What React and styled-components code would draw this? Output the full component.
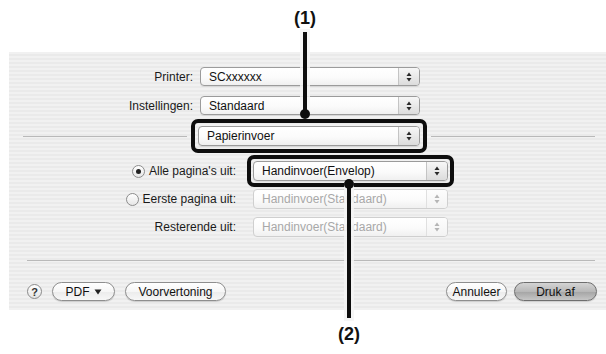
import React from "react";
import styled, { createGlobalStyle } from "styled-components";

const GlobalStyle = createGlobalStyle`
  html, body {
    margin: 0;
    padding: 0;
    background: #ffffff;
  }
  body {
    font-family: "Liberation Sans", Arial, sans-serif;
    color: #1a1a1a;
  }
`;

const Page = styled.div`
  position: relative;
  width: 606px;
  height: 354px;
  overflow: hidden;
  background: #ffffff;
`;

const CalloutRow = styled.div`
  height: ${(p) => p.h}px;
  display: flex;
  align-items: ${(p) => (p.bottom ? "flex-end" : "flex-start")};
`;

const CalloutText = styled.div`
  width: 40px;
  margin-left: ${(p) => p.x - 20}px;
  margin-top: ${(p) => p.top || 0}px;
  margin-bottom: ${(p) => p.bottomGap || 0}px;
  text-align: center;
  font-weight: bold;
  font-size: 18px;
  line-height: 20px;
  color: #111;
`;

const Panel = styled.div`
  margin-left: 9px;
  width: 597px;
  height: 258px;
  box-sizing: border-box;
  padding-top: 15px;
  display: flex;
  flex-direction: column;
  background: repeating-linear-gradient(
    to bottom,
    #f1f1f1 0px,
    #f1f1f1 2px,
    #eaeaea 2px,
    #eaeaea 4px
  );
`;

const FormGrid = styled.div`
  display: grid;
  grid-template-columns: ${(p) => p.labelWidth}px ${(p) => p.fieldWidth}px;
  column-gap: ${(p) => p.colGap}px;
  row-gap: ${(p) => p.rowGap}px;
  margin-top: ${(p) => p.mt || 0}px;
  align-items: center;
`;

const Label = styled.div`
  display: flex;
  align-items: center;
  justify-content: flex-end;
  gap: 4px;
  font-size: 12px;
  color: #1a1a1a;
  white-space: nowrap;
`;

const Highlight = styled.div`
  position: relative;
  &::after {
    content: "";
    position: absolute;
    inset: ${(p) => p.inset || "-6px"};
    border: 4px solid #0d0d0d;
    border-radius: 7px;
    pointer-events: none;
  }
`;

const PopupBox = styled.div`
  height: ${(p) => p.h || 19}px;
  width: ${(p) => p.w}px;
  box-sizing: border-box;
  display: flex;
  align-items: stretch;
  border: 1px solid ${(p) => (p.disabled ? "#cfcfcf" : "#9b9b9b")};
  border-radius: 4px;
  background: linear-gradient(to bottom, #ffffff 0%, #fbfbfb 55%, #f0f0f0 100%);
  box-shadow: ${(p) => (p.disabled ? "none" : "0 1px 0 rgba(0,0,0,0.08)")};
`;

const PopupText = styled.div`
  flex: 1;
  display: flex;
  align-items: center;
  padding-left: 8px;
  font-size: 12px;
  color: ${(p) => (p.disabled ? "#a8a8a8" : "#111")};
  white-space: nowrap;
  overflow: hidden;
`;

const ArrowCell = styled.div`
  width: 20px;
  display: flex;
  align-items: center;
  justify-content: center;
  border-left: 1px solid ${(p) => (p.disabled ? "#e0e0e0" : "#c4c4c4")};
  border-radius: 0 3px 3px 0;
  background: ${(p) =>
    p.disabled
      ? "linear-gradient(to bottom, #fdfdfd, #f3f3f3)"
      : "linear-gradient(to bottom, #f7f7f7, #dcdcdc)"};
`;

const Arrows = ({ disabled }) => (
  <svg width="6" height="10" viewBox="0 0 6 10">
    <path d="M3 0.5 L5.5 4 L0.5 4 Z" fill={disabled ? "#b5b5b5" : "#2a2a2a"} />
    <path d="M3 9.5 L5.5 6 L0.5 6 Z" fill={disabled ? "#b5b5b5" : "#2a2a2a"} />
  </svg>
);

const Popup = ({ text, w, h, disabled }) => (
  <PopupBox w={w} h={h} disabled={disabled}>
    <PopupText disabled={disabled}>{text}</PopupText>
    <ArrowCell disabled={disabled}>
      <Arrows disabled={disabled} />
    </ArrowCell>
  </PopupBox>
);

const DividerRow = styled.div`
  display: flex;
  align-items: center;
  margin-top: ${(p) => p.mt}px;
  padding: 0 11px 0 14px;
  gap: 11px;
`;

const Rule = styled.div`
  flex: 1;
  height: 1px;
  background: #b9b9b9;
`;

const Separator = styled.div`
  height: 1px;
  margin: ${(p) => p.mt}px 11px 0 18px;
  background: #b9b9b9;
`;

const Radio = styled.span`
  width: 13px;
  height: 13px;
  box-sizing: border-box;
  border-radius: 50%;
  border: 1px solid #8c8c8c;
  background: linear-gradient(to bottom, #ffffff, #e6e6e6);
  display: inline-flex;
  align-items: center;
  justify-content: center;
  &::after {
    content: "";
    width: 5px;
    height: 5px;
    border-radius: 50%;
    background: ${(p) => (p.checked ? "#222" : "transparent")};
  }
`;

const ButtonRow = styled.div`
  display: flex;
  align-items: center;
  margin-top: ${(p) => p.mt}px;
  padding: 0 9px 0 18px;
  gap: 10px;
`;

const Spacer = styled.div`
  flex: 1;
`;

const HelpButton = styled.div`
  width: 15px;
  height: 15px;
  box-sizing: border-box;
  border-radius: 50%;
  border: 1px solid #8a8a8a;
  background: linear-gradient(to bottom, #ffffff, #e4e4e4);
  display: flex;
  align-items: center;
  justify-content: center;
  font-size: 11px;
  font-weight: bold;
  color: #333;
`;

const PillButton = styled.div`
  width: ${(p) => p.w}px;
  height: 19px;
  box-sizing: border-box;
  border-radius: 10px;
  border: 1px solid ${(p) => (p.primary ? "#6e6e6e" : "#8e8e8e")};
  background: ${(p) =>
    p.primary
      ? "linear-gradient(to bottom, #d4d4d4 0%, #b8b8b8 50%, #a4a4a4 51%, #c6c6c6 100%)"
      : "linear-gradient(to bottom, #ffffff 0%, #f6f6f6 50%, #ebebeb 51%, #f7f7f7 100%)"};
  box-shadow: 0 1px 1px rgba(0, 0, 0, 0.15);
  margin-left: ${(p) => p.ml || 0}px;
  display: flex;
  align-items: center;
  justify-content: center;
  gap: 4px;
  font-size: 12px;
  color: #111;
  white-space: nowrap;
`;

const PointerLine = styled.div`
  position: absolute;
  left: ${(p) => p.x - 2}px;
  top: ${(p) => p.top}px;
  width: 4px;
  height: ${(p) => p.h}px;
  background: #0d0d0d;
  box-shadow: 0 0 0 3px rgba(244, 244, 244, 0.85);
`;

const PointerDot = styled.div`
  position: absolute;
  left: ${(p) => p.x - 5}px;
  top: ${(p) => p.y - 5}px;
  width: 10px;
  height: 10px;
  border-radius: 50%;
  background: #0d0d0d;
`;

export default function App() {
  return (
    <>
      <GlobalStyle />
      <Page>
        <CalloutRow h={52}>
          <CalloutText x={305} top={8}>(1)</CalloutText>
        </CalloutRow>

        <Panel>
          <FormGrid labelWidth={184} fieldWidth={220} colGap={7} rowGap={10}>
            <Label>Printer:</Label>
            <Popup text="SCxxxxxx" w={220} />
            <Label>Instellingen:</Label>
            <Popup text="Standaard" w={220} />
          </FormGrid>

          <DividerRow mt={11}>
            <Rule />
            <Highlight inset="-7px">
              <Popup text="Papierinvoer" w={222} h={20} />
            </Highlight>
            <Rule />
          </DividerRow>

          <FormGrid labelWidth={227} fieldWidth={195} colGap={17} rowGap={8} mt={15}>
            <Label>
              <Radio checked />
              Alle pagina's uit:
            </Label>
            <Highlight>
              <Popup text="Handinvoer(Envelop)" w={195} h={20} />
            </Highlight>
            <Label>
              <Radio />
              Eerste pagina uit:
            </Label>
            <Popup text="Handinvoer(Standaard)" w={195} h={20} disabled />
            <Label>Resterende uit:</Label>
            <Popup text="Handinvoer(Standaard)" w={195} h={20} disabled />
          </FormGrid>

          <Separator mt={23} />

          <ButtonRow mt={21}>
            <HelpButton>?</HelpButton>
            <PillButton w={63}>
              PDF
              <svg width="8" height="6" viewBox="0 0 8 6">
                <path d="M0.5 0.5 L7.5 0.5 L4 5.5 Z" fill="#222" />
              </svg>
            </PillButton>
            <PillButton w={101}>Voorvertoning</PillButton>
            <Spacer />
            <PillButton w={61}>Annuleer</PillButton>
            <PillButton w={83} primary ml={-3}>
              Druk af
            </PillButton>
          </ButtonRow>
        </Panel>

        <CalloutRow h={44} bottom>
          <CalloutText x={349} bottomGap={10}>
            (2)
          </CalloutText>
        </CalloutRow>

        <PointerLine x={305} top={32} h={82} />
        <PointerDot x={305} y={114} />
        <PointerLine x={349} top={184} h={134} />
        <PointerDot x={349} y={184} />
      </Page>
    </>
  );
}
